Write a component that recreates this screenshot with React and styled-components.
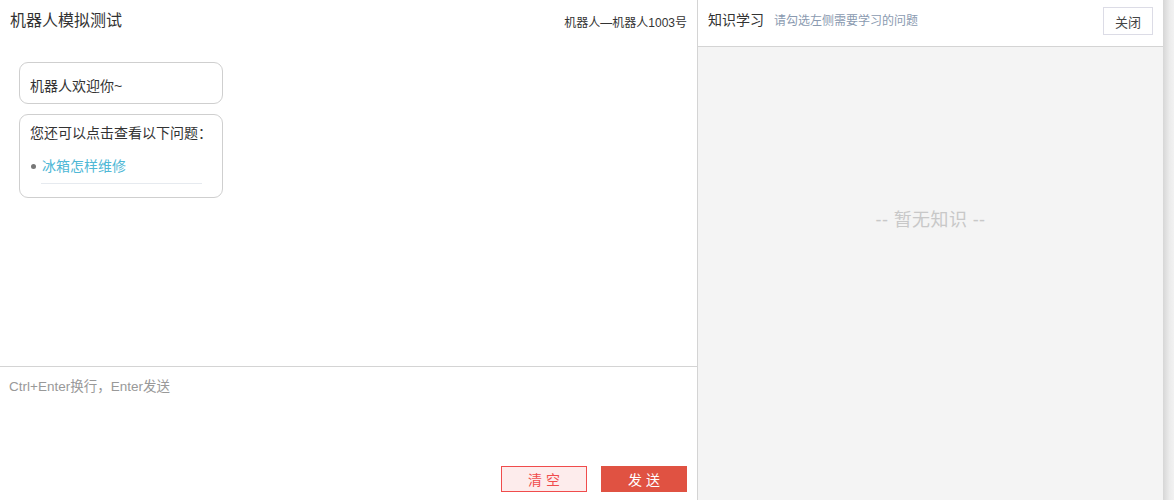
import React from "react";
import styled, { createGlobalStyle } from "styled-components";

const GlobalStyle = createGlobalStyle`
  html, body {
    margin: 0;
    padding: 0;
    background: #fff;
    font-family: "Liberation Sans", "Noto Sans CJK SC", sans-serif;
  }
  * { box-sizing: border-box; }
`;

const Page = styled.div`
  display: flex;
  width: 1174px;
  height: 500px;
  overflow: hidden;
`;

const ChatPanel = styled.div`
  width: 698px;
  display: flex;
  flex-direction: column;
  border-right: 1px solid #d4d4d4;
`;

const ChatHeader = styled.div`
  height: 42px;
  display: flex;
  align-items: center;
  justify-content: space-between;
  padding: 0 10px 0 10px;
`;

const ChatTitle = styled.span`
  font-size: 16px;
  color: #333;
  position: relative;
  top: -2px;
`;

const RobotName = styled.span`
  font-size: 12px;
  color: #333;
`;

const Messages = styled.div`
  flex: 1;
  padding: 20px 19px;
  display: flex;
  flex-direction: column;
  align-items: flex-start;
  gap: 10px;
`;

const Bubble = styled.div`
  width: 204px;
  border: 1px solid #cfcfcf;
  border-radius: 9px;
  padding: ${(p) => p.$pad || "14px 10px 8px"};
  font-size: 14px;
  line-height: 20px;
  color: #333;
`;

const Question = styled.div`
  display: flex;
  align-items: center;
  margin: 13px 0 0 0;
  padding-bottom: 7px;
  font-size: 14px;
  line-height: 20px;
  color: #4fb8d6;
  &::before {
    content: "";
    width: 5px;
    height: 5px;
    border-radius: 50%;
    background: #777;
    margin: 0 6px 0 1px;
  }
`;

const Divider = styled.div`
  margin: 0 10px 0 11px;
  border-top: 1px solid #e6eaef;
`;

const InputArea = styled.div`
  height: 134px;
  border-top: 1px solid #d4d4d4;
  display: flex;
  flex-direction: column;
  padding: 8px 10px 8px 9px;
`;

const Placeholder = styled.div`
  flex: 1;
  font-size: 13.5px;
  color: #999;
`;

const Actions = styled.div`
  display: flex;
  justify-content: flex-end;
  gap: 14px;
`;

const Button = styled.button`
  width: 86px;
  height: 26px;
  font-family: inherit;
  font-size: 14px;
  letter-spacing: 4px;
  text-indent: 4px;
  cursor: pointer;
  border: 1px solid ${(p) => (p.$primary ? "#e05242" : "#f04c4c")};
  background: ${(p) => (p.$primary ? "#e05242" : "#fdecec")};
  color: ${(p) => (p.$primary ? "#fff" : "#f04c4c")};
  padding: 0;
`;

const KnowledgePanel = styled.div`
  width: 465px;
  display: flex;
  flex-direction: column;
  background: #f4f4f4;
`;

const KnowledgeHeader = styled.div`
  height: 47px;
  background: #fff;
  border-bottom: 1px solid #d4d4d4;
  display: flex;
  align-items: center;
  padding: 0 10px 0 10px;
  gap: 10px;
`;

const KnowledgeTitle = styled.span`
  font-size: 14px;
  color: #333;
  position: relative;
  top: -4px;
`;

const Hint = styled.span`
  flex: 1;
  font-size: 12px;
  color: #8a9ab0;
  position: relative;
  top: -4px;
`;

const CloseButton = styled.button`
  width: 50px;
  height: 28px;
  border: 1px solid #dcdce6;
  background: #fff;
  color: #444;
  font-family: inherit;
  font-size: 13px;
  padding: 0;
  position: relative;
  top: -2px;
`;

const Empty = styled.div`
  flex: 1;
  display: flex;
  justify-content: center;
  padding-top: 158px;
  font-size: 18px;
  letter-spacing: 0.4px;
  color: #c8c8c8;
`;

const Gutter = styled.div`
  width: 11px;
  background: linear-gradient(to right, #d6d6d6, #ececec 60%, #f2f2f2);
`;

export default function App() {
  return (
    <>
      <GlobalStyle />
      <Page>
        <ChatPanel>
          <ChatHeader>
            <ChatTitle>机器人模拟测试</ChatTitle>
            <RobotName>机器人—机器人1003号</RobotName>
          </ChatHeader>
          <Messages>
            <Bubble $pad="13px 10px 7px">机器人欢迎你~</Bubble>
            <Bubble $pad="8px 10px 13px">
              您还可以点击查看以下问题：
              <Question>冰箱怎样维修</Question>
              <Divider />
            </Bubble>
          </Messages>
          <InputArea>
            <Placeholder>Ctrl+Enter换行，Enter发送</Placeholder>
            <Actions>
              <Button>清空</Button>
              <Button $primary>发送</Button>
            </Actions>
          </InputArea>
        </ChatPanel>
        <KnowledgePanel>
          <KnowledgeHeader>
            <KnowledgeTitle>知识学习</KnowledgeTitle>
            <Hint>请勾选左侧需要学习的问题</Hint>
            <CloseButton>关闭</CloseButton>
          </KnowledgeHeader>
          <Empty>-- 暂无知识 --</Empty>
        </KnowledgePanel>
        <Gutter />
      </Page>
    </>
  );
}
